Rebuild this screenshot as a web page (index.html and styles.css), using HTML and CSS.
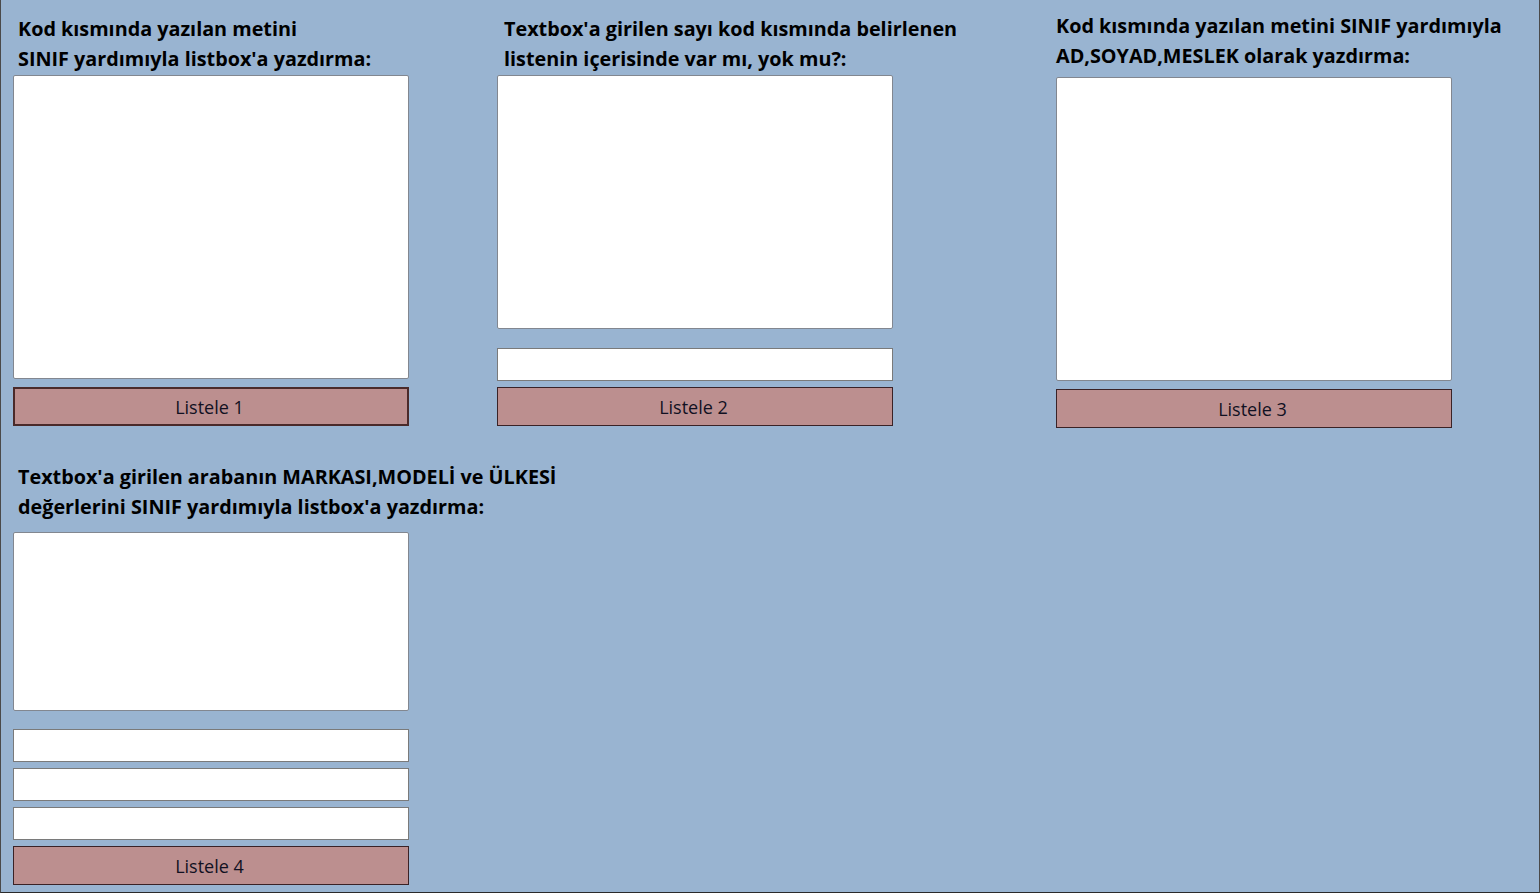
FILE: index.html
```html
<!DOCTYPE html>
<html lang="tr">
<head>
  <meta charset="UTF-8" />
  <title>Form1</title>
  <link rel="stylesheet" href="styles.css">
</head>
<body>
  <div class="window">
    <div class="row">
      <div class="panel panel-one">
        <div class="title">Kod kısmında yazılan metini<br>SINIF yardımıyla listbox'a yazdırma:</div>
        <select class="listbox tall" size="10"></select>
        <button class="btn default">Listele 1</button>
      </div>

      <div class="panel panel-two">
        <div class="title">Textbox'a girilen sayı kod kısmında belirlenen<br>listenin içerisinde var mı, yok mu?:</div>
        <select class="listbox mid" size="10"></select>
        <input class="textbox first" type="text" />
        <button class="btn">Listele 2</button>
      </div>

      <div class="panel panel-three">
        <div class="title">Kod kısmında yazılan metini SINIF yardımıyla<br>AD,SOYAD,MESLEK olarak yazdırma:</div>
        <select class="listbox tall" size="10"></select>
        <button class="btn">Listele 3</button>
      </div>
    </div>

    <div class="panel panel-four">
      <div class="title">Textbox'a girilen arabanın MARKASI,MODELİ ve ÜLKESİ<br>değerlerini SINIF yardımıyla listbox'a yazdırma:</div>
      <select class="listbox short" size="10"></select>
      <input class="textbox first" type="text" />
      <input class="textbox" type="text" />
      <input class="textbox" type="text" />
      <button class="btn">Listele 4</button>
    </div>
  </div>
</body>
</html>
```

FILE: styles.css
```css
* {
  box-sizing: border-box;
}

body {
  margin: 0;
  font-family: "Open Sans", "Noto Sans", sans-serif;
}

.window {
  width: 1540px;
  height: 893px;
  background: #99b4d1;
  border-left: 1px solid #4a4a4a;
  border-right: 1px solid #4a4a4a;
  border-bottom: 1px solid #2a2a2a;
  padding-left: 12px;
  display: flex;
  flex-direction: column;
}

.row {
  display: flex;
  align-items: flex-start;
}

.panel {
  width: 396px;
  display: flex;
  flex-direction: column;
}

.title {
  font-size: 19.8px;
  font-weight: 700;
  line-height: 30px;
  color: #000;
  white-space: nowrap;
}

.panel-one .title {
  margin-top: 14px;
  padding-left: 5px;
}

.panel-two {
  margin-left: 88px;
}

.panel-two .title {
  margin-top: 14px;
  padding-left: 7px;
}

.panel-three {
  margin-left: 163px;
}

.panel-three .title {
  margin-top: 11px;
  margin-bottom: 5px;
}

.panel-four .title {
  margin-top: 34px;
  margin-bottom: 9px;
  padding-left: 5px;
}

.listbox {
  margin-top: 1px;
  width: 396px;
  background: #fff;
  border: 1px solid #828790;
  padding: 0;
  outline: none;
}

.tall {
  height: 304px;
}

.mid {
  height: 254px;
}

.short {
  height: 179px;
}

.textbox {
  width: 396px;
  height: 33px;
  margin: 6px 0 0;
  border: 1px solid #7a7a7a;
  background: #fff;
  padding: 0 4px;
}

.textbox.first {
  margin-top: 19px;
}

.panel-four .textbox.first {
  margin-top: 18px;
}

.btn {
  width: 396px;
  height: 39px;
  margin-top: 6px;
  background: #bc8f8f;
  border: 1px solid #3a2226;
  color: #111122;
  font-family: "Open Sans", "Noto Sans", sans-serif;
  font-size: 18px;
  padding: 0 3px 0 0;
}

.panel-one .btn,
.panel-three .btn {
  margin-top: 8px;
}

.btn.default {
  border: 2px solid #4a2a2a;
}
```
